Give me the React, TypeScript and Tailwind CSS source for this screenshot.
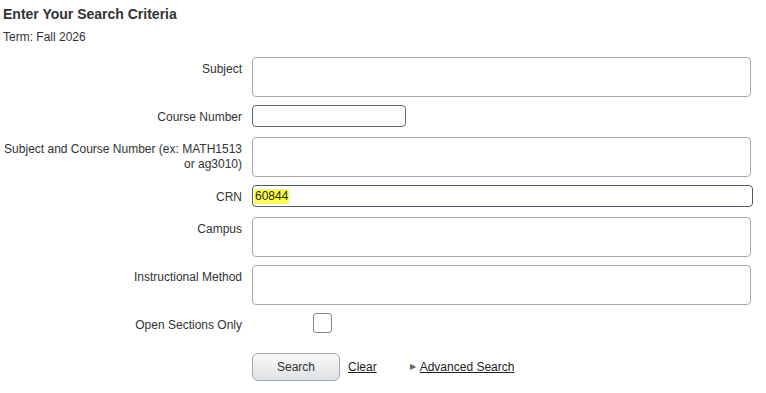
import React from 'react';

function Label({ children }: { children: React.ReactNode }) {
  return <div className="pt-[5px] text-right leading-[15px] text-[#333]">{children}</div>;
}

export default function App() {
  return (
    <div className="min-h-screen bg-white font-['Liberation_Sans',Arial,sans-serif] text-[12px] text-[#333]">
      <div className="px-[3px] pt-[5px]">
        <h2 className="text-[14px] font-bold leading-[18px] text-[#333]">Enter Your Search Criteria</h2>
        <p className="mt-[7px] leading-[14px]">Term: Fall 2026</p>
      </div>
      <div className="mt-[13px] grid grid-cols-[242px_501px] gap-x-[10px]">
        <Label>Subject</Label>
        <div className="h-[40px] w-[499px] rounded-[4px] border border-[#aaa] bg-white" />

        <div className="mt-[8px]"><Label>Course Number</Label></div>
        <div className="mt-[8px]">
          <input className="h-[22px] w-[154px] rounded-[4px] border border-[#5a6572] bg-white px-1 outline-none" />
        </div>

        <div className="mt-[10px]">
          <Label>
            Subject and Course Number (ex: MATH1513
            <br />
            or ag3010)
          </Label>
        </div>
        <div className="mt-[10px] h-[40px] w-[499px] rounded-[4px] border border-[#aaa] bg-white" />

        <div className="mt-[8px]"><Label>CRN</Label></div>
        <div className="mt-[8px] flex h-[22px] w-[501px] items-center rounded-[4px] border border-[#4f5d6b] bg-white pl-[1px]">
          <span className="bg-[#ffff4d] px-[1px] leading-[15px] text-[#222]">60844</span>
        </div>

        <div className="mt-[10px]"><Label>Campus</Label></div>
        <div className="mt-[10px] h-[40px] w-[499px] rounded-[4px] border border-[#aaa] bg-white" />

        <div className="mt-[8px]"><Label>Instructional Method</Label></div>
        <div className="mt-[8px] h-[40px] w-[499px] rounded-[4px] border border-[#aaa] bg-white" />

        <div className="mt-[8px]"><Label>Open Sections Only</Label></div>
        <div className="mt-[8px] pl-[61px]">
          <div className="h-[20px] w-[19px] rounded-[3px] border border-[#888] bg-white" />
        </div>

        <div />
        <div className="mt-[20px] flex items-center">
          <button className="h-[28px] w-[88px] rounded-[6px] border border-[#9aa6b2] bg-gradient-to-b from-[#fafafa] to-[#dfe1e3] text-[12px] text-[#333]">
            Search
          </button>
          <a className="ml-[8px] text-[#222] underline">Clear</a>
          <span className="ml-[33px] text-[8px] text-[#666]">▶</span>
          <a className="ml-[4px] text-[#222] underline">Advanced Search</a>
        </div>
      </div>
    </div>
  );
}
